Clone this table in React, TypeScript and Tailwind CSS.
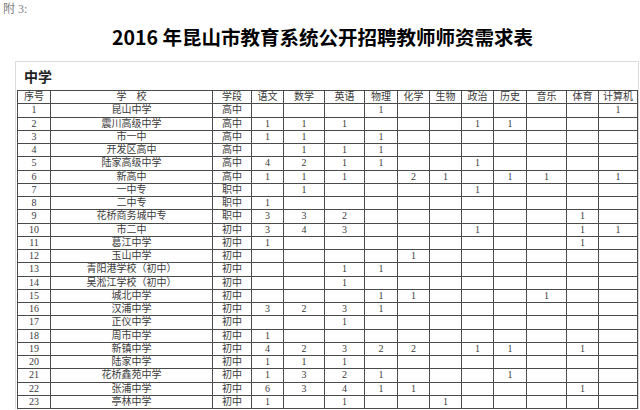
import React from "react";

type Row = [string, string, string, string[]];

const subjects = ["语文", "数学", "英语", "物理", "化学", "生物", "政治", "历史", "音乐", "体育", "计算机"];

const rows: Row[] = [
  ["1", "昆山中学", "高中", ["", "", "", "1", "", "", "", "", "", "", "1"]],
  ["2", "震川高级中学", "高中", ["1", "1", "1", "", "", "", "1", "1", "", "", ""]],
  ["3", "市一中", "高中", ["1", "1", "", "1", "", "", "", "", "", "", ""]],
  ["4", "开发区高中", "高中", ["", "1", "1", "1", "", "", "", "", "", "", ""]],
  ["5", "陆家高级中学", "高中", ["4", "2", "1", "1", "", "", "1", "", "", "", ""]],
  ["6", "新高中", "高中", ["1", "1", "1", "", "2", "1", "", "1", "1", "", "1"]],
  ["7", "一中专", "职中", ["", "1", "", "", "", "", "1", "", "", "", ""]],
  ["8", "二中专", "职中", ["1", "", "", "", "", "", "", "", "", "", ""]],
  ["9", "花桥商务城中专", "职中", ["3", "3", "2", "", "", "", "", "", "", "1", ""]],
  ["10", "市二中", "初中", ["3", "4", "3", "", "", "", "1", "", "", "1", "1"]],
  ["11", "葛江中学", "初中", ["1", "", "", "", "", "", "", "", "", "1", ""]],
  ["12", "玉山中学", "初中", ["", "", "", "", "1", "", "", "", "", "", ""]],
  ["13", "青阳港学校（初中）", "初中", ["", "", "1", "1", "", "", "", "", "", "", ""]],
  ["14", "吴淞江学校（初中）", "初中", ["", "", "1", "", "", "", "", "", "", "", ""]],
  ["15", "城北中学", "初中", ["", "", "", "1", "1", "", "", "", "1", "", ""]],
  ["16", "汉浦中学", "初中", ["3", "2", "3", "1", "", "", "", "", "", "", ""]],
  ["17", "正仪中学", "初中", ["", "", "1", "", "", "", "", "", "", "", ""]],
  ["18", "周市中学", "初中", ["1", "", "", "", "", "", "", "", "", "", ""]],
  ["19", "新镇中学", "初中", ["4", "2", "3", "2", "2", "", "1", "1", "", "1", ""]],
  ["20", "陆家中学", "初中", ["1", "1", "1", "", "", "", "", "", "", "", ""]],
  ["21", "花桥鑫苑中学", "初中", ["1", "3", "2", "1", "", "", "", "1", "", "", ""]],
  ["22", "张浦中学", "初中", ["6", "3", "4", "1", "1", "", "", "", "", "1", ""]],
  ["23", "亭林中学", "初中", ["1", "", "1", "", "", "1", "", "", "", "", ""]],
];

const cell = "bg-white flex items-center justify-center leading-none whitespace-nowrap";

export default function App() {
  return (
    <div
      className="w-[640px] h-[410px] bg-white overflow-hidden text-[#222]"
      style={{ fontFamily: '"Liberation Serif", "Noto Sans CJK SC", serif' }}
    >
      <div className="pt-[2px] pl-[3px] h-[16px] text-[12px] leading-[14px] text-[#808080]">附 3:</div>
      <div
        className="mt-[7px] h-[27px] leading-[27px] text-center text-[19.5px] font-bold text-black pl-[5px]"
        style={{ fontFamily: '"Noto Sans CJK SC", sans-serif' }}
      >
        2016 年昆山市教育系统公开招聘教师师资需求表
      </div>
      <div className="mt-[11px] ml-[15px] w-[624px] border-t border-l border-r border-[#dcdcdc]">
        <div
          className="h-[28px] flex items-center pl-[8px] text-[14px] font-bold text-[#222]"
          style={{ fontFamily: '"Noto Sans CJK SC", sans-serif' }}
        >
          中学
        </div>
        <div className="ml-[1px] w-[621px] grid grid-cols-[32px_161px_38px_31px_40px_39px_32px_31px_31px_31px_32px_39px_31px_38px] auto-rows-[12.25px] gap-[1px] p-[1px] bg-[#4a4a4a] text-[10px] text-[#3a3a3a]">
          <div className={cell}>序号</div>
          <div className={cell + " gap-[10px]"}>
            <span>学</span>
            <span>校</span>
          </div>
          <div className={cell}>学段</div>
          {subjects.map((s) => (
            <div key={s} className={cell}>
              {s}
            </div>
          ))}
          {rows.map(([n, school, level, vals]) => (
            <React.Fragment key={n}>
              <div className={cell}>{n}</div>
              <div className={cell}>{school}</div>
              <div className={cell}>{level}</div>
              {vals.map((v, i) => (
                <div key={i} className={cell}>
                  {v}
                </div>
              ))}
            </React.Fragment>
          ))}
        </div>
      </div>
    </div>
  );
}
